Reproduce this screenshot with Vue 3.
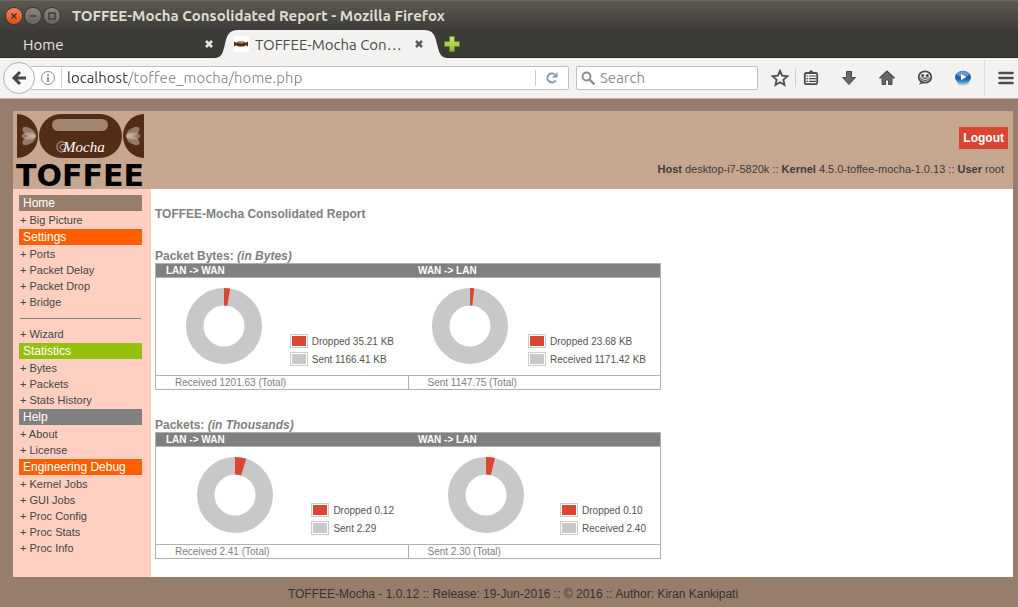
<script setup>
const menu = [
  { title: 'Home', tone: 'brown', groups: [['Big Picture']] },
  { title: 'Settings', tone: 'orange', groups: [['Ports', 'Packet Delay', 'Packet Drop', 'Bridge'], ['Wizard']] },
  { title: 'Statistics', tone: 'green', groups: [['Bytes', 'Packets', 'Stats History']] },
  { title: 'Help', tone: 'gray', groups: [['About', 'License']] },
  { title: 'Engineering Debug', tone: 'orange', groups: [['Kernel Jobs', 'GUI Jobs', 'Proc Config', 'Proc Stats', 'Proc Info']] },
]

const reports = [
  {
    name: 'Packet Bytes:',
    unit: '(in Bytes)',
    charts: [
      { head: 'LAN -> WAN', share: 2.6, dropped: 'Dropped 35.21 KB', passed: 'Sent 1166.41 KB', total: 'Received 1201.63 (Total)' },
      { head: 'WAN -> LAN', share: 1.8, dropped: 'Dropped 23.68 KB', passed: 'Received 1171.42 KB', total: 'Sent 1147.75 (Total)' },
    ],
  },
  {
    name: 'Packets:',
    unit: '(in Thousands)',
    charts: [
      { head: 'LAN -> WAN', share: 4.8, dropped: 'Dropped 0.12', passed: 'Sent 2.29', total: 'Received 2.41 (Total)' },
      { head: 'WAN -> LAN', share: 3.8, dropped: 'Dropped 0.10', passed: 'Received 2.40', total: 'Sent 2.30 (Total)' },
    ],
  },
]
</script>

<template>
  <div class="window">
    <header class="titlebar">
      <button class="wm close" aria-label="Close window">
        <svg viewBox="0 0 16 16"><path d="M5.5 5.5l5 5M10.5 5.5l-5 5" stroke="#4a2a1c" stroke-width="1.4" /></svg>
      </button>
      <button class="wm" aria-label="Minimize">
        <svg viewBox="0 0 16 16"><path d="M4.5 8h7" stroke="#3a3934" stroke-width="1.3" /></svg>
      </button>
      <button class="wm" aria-label="Maximize">
        <svg viewBox="0 0 16 16"><rect x="5" y="5" width="6" height="6" fill="none" stroke="#3a3934" stroke-width="1.3" /></svg>
      </button>
      <span class="window-title">TOFFEE-Mocha Consolidated Report - Mozilla Firefox</span>
    </header>

    <nav class="tabs" aria-label="Tabs">
      <div class="tab">
        <button class="tab-label">Home</button>
        <button class="tab-close" aria-label="Close Home">
          <svg viewBox="0 0 10 10"><path d="M2 2l6 6M8 2l-6 6" stroke="#e6e4df" stroke-width="2.6" /></svg>
        </button>
      </div>
      <div class="tab active">
        <svg class="tab-shape" viewBox="0 0 234 28" preserveAspectRatio="none">
          <path d="M0 28C8 28 9 22 11 14C13 5 15 0 24 0H210C219 0 221 5 223 14C225 22 226 28 234 28Z" fill="#f3f2f1" />
        </svg>
        <svg class="favicon" viewBox="0 0 16 16">
          <rect width="16" height="16" fill="#fff" />
          <path d="M1 5.500L4 7v2L1 10.500ZM15 5.500L12 7v2l3 1.500Z" fill="#5a3019" />
          <rect x="3.500" y="5.500" width="9" height="5" rx="2.500" fill="#4e2a15" />
          <rect x="5" y="6" width="6" height="1.500" rx=".7" fill="#a18069" />
        </svg>
        <button class="tab-label">TOFFEE-Mocha Con…</button>
        <button class="tab-close" aria-label="Close TOFFEE-Mocha">
          <svg viewBox="0 0 10 10"><path d="M2 2l6 6M8 2l-6 6" stroke="#5d5c59" stroke-width="2.600" /></svg>
        </button>
      </div>
      <button class="new-tab" aria-label="New tab">
        <svg viewBox="0 0 16 16">
          <defs><linearGradient id="plus" x2="0" y2="1"><stop offset="0" stop-color="#d5e86a" /><stop offset="1" stop-color="#8fb72c" /></linearGradient></defs>
          <path d="M5.500 .5h5v5h5v5h-5v5h-5v-5h-5v-5h5Z" fill="url(#plus)" stroke="#5f8a2a" />
        </svg>
      </button>
    </nav>

    <div class="toolbar">
      <button class="back" aria-label="Back">
        <svg viewBox="0 0 16 16"><path d="M9 2L3 8l6 6M3.500 8H15" fill="none" stroke="#474745" stroke-width="3" /></svg>
      </button>
      <div class="urlbar">
        <svg class="info" viewBox="0 0 16 16">
          <circle cx="8" cy="8" r="6.500" fill="none" stroke="#8c8c8c" />
          <path d="M8 7v5M8 4v2" stroke="#8c8c8c" stroke-width="1.600" />
        </svg>
        <input class="url" aria-label="Address" value="localhost/toffee_mocha/home.php" />
        <button class="reload" aria-label="Reload">
          <svg viewBox="0 0 14 14">
            <path d="M10.700 9.500A4.500 4.500 0 1 1 9.500 3.200" fill="none" stroke="#8596a6" stroke-width="2" />
            <path d="M12.500 1v5.500H7Z" fill="#8596a6" />
          </svg>
        </button>
      </div>
      <div class="searchbar">
        <svg viewBox="0 0 14 14"><circle cx="5.500" cy="5.500" r="4" fill="none" stroke="#8c8c8c" stroke-width="1.900" /><path d="M8.500 8.500l5 5" stroke="#8c8c8c" stroke-width="2.400" /></svg>
        <input aria-label="Search" placeholder="Search" />
      </div>
      <button class="tool star" aria-label="Bookmark">
        <svg viewBox="0 0 18 18"><path d="M9 1.800l2.100 4.900 5.200.5-3.900 3.500 1.100 5.200L9 13.200l-4.500 2.700 1.100-5.200L1.700 7.200l5.200-.5Z" fill="none" stroke="#4c4c4a" stroke-width="1.800" /></svg>
      </button>
      <span class="rule short"></span>
      <button class="tool list" aria-label="Bookmarks menu">
        <svg viewBox="0 0 18 18">
          <path d="M5.500 4L9 1l3.500 3Z" fill="#4c4c4a" />
          <rect x="2.800" y="4" width="12.400" height="11.200" rx="1.500" fill="#f3f2f1" stroke="#4c4c4a" stroke-width="1.800" />
          <path d="M4.500 7h1.500M4.500 9.700h1.500M4.500 12.400h1.500M7 7h7M7 9.700h7M7 12.400h7" stroke="#4c4c4a" stroke-width="1.200" />
        </svg>
      </button>
      <button class="tool" aria-label="Downloads">
        <svg viewBox="0 0 18 18"><path d="M6.500 2.500h5v6h4L9 15.500 2.500 8.500h4Z" fill="#686866" stroke="#4c4c4a" /></svg>
      </button>
      <button class="tool" aria-label="Home page">
        <svg viewBox="0 0 18 18">
          <path d="M4 9l5-4.500L14 9v6.500h-3.500V11h-3v4.500H4Z" fill="#686866" stroke="#4c4c4a" />
          <path d="M1.500 9.300L9 2.500l7.500 6.800" fill="none" stroke="#4c4c4a" stroke-width="1.700" />
        </svg>
      </button>
      <button class="tool" aria-label="Chat">
        <svg viewBox="0 0 18 18">
          <path d="M5 12.500L3 15.500l5-1.500Z" fill="#4c4c4a" />
          <ellipse cx="9" cy="8" rx="6.300" ry="5.600" fill="#f3f2f1" stroke="#4c4c4a" stroke-width="1.800" />
          <circle cx="6.700" cy="6.500" r="1.500" fill="#4c4c4a" /><circle cx="11.300" cy="6.500" r="1.500" fill="#4c4c4a" />
          <path d="M4 8.500h10c-.8 4.500-9.200 4.500-10 0Z" fill="#4c4c4a" /><path d="M5.500 9.500q3.500 2 7 0" fill="none" stroke="#f3f2f1" />
        </svg>
      </button>
      <button class="tool" aria-label="Media player">
        <svg viewBox="0 0 18 18">
          <defs><linearGradient id="ball" x2="0" y2="1"><stop offset="0" stop-color="#2d6cad" /><stop offset=".6" stop-color="#1960a8" /><stop offset="1" stop-color="#55b4ee" /></linearGradient></defs>
          <ellipse cx="9" cy="14" rx="6" ry="2.500" fill="#c4c7ca" />
          <ellipse cx="9" cy="8.300" rx="8" ry="6.500" fill="url(#ball)" />
          <ellipse cx="9" cy="5" rx="6" ry="2.800" fill="#8db8df" opacity=".6" />
          <path d="M7 5l5.500 3L7 11Z" fill="#fff" />
        </svg>
      </button>
      <span class="rule tall"></span>
      <button class="tool menu-button" aria-label="Menu">
        <svg viewBox="0 0 18 18"><path d="M2.500 4h13M2.500 9h13M2.500 14h13" stroke="#4c4c4a" stroke-width="2.600" stroke-linecap="round" /></svg>
      </button>
    </div>

    <div class="page">
      <div class="sheet">
        <header class="banner">
          <svg class="logo" viewBox="0 0 130 76" role="img" aria-label="TOFFEE Mocha">
            <path d="M1 2a21 22 0 0 1 0 44ZM128 2a21 22 0 0 0 0 44Z" fill="#532c17" />
            <rect x="23" y="2" width="83" height="44" rx="22" fill="#532c17" />
            <rect x="36" y="7" width="56" height="12" rx="6" fill="#a28570" />
            <g fill="#dcc4b4" fill-opacity=".5">
              <ellipse cx="13" cy="20" rx="7.500" ry="4" transform="rotate(34 13 20)" />
              <ellipse cx="13" cy="24" rx="7.500" ry="3.500" />
              <ellipse cx="13" cy="28" rx="7.500" ry="4" transform="rotate(-34 13 28)" />
              <ellipse cx="117" cy="20" rx="7.500" ry="4" transform="rotate(-34 117 20)" />
              <ellipse cx="117" cy="24" rx="7.500" ry="3.500" />
              <ellipse cx="117" cy="28" rx="7.500" ry="4" transform="rotate(34 117 28)" />
            </g>
            <path d="M49 31c-4-3-9 0-8 5s8 6 9-1c0-4-6-3-6 0 0 4 5 3 5 1" fill="none" stroke="#fff" stroke-width=".6" />
            <text x="47" y="40" class="mocha">Mocha</text>
            <text x="0" y="74" class="toffee">TOFFEE</text>
          </svg>
          <div class="session">
            <button class="logout">Logout</button>
            <p class="host"><b>Host</b> desktop-i7-5820k :: <b>Kernel</b> 4.5.0-toffee-mocha-1.0.13 :: <b>User</b> root</p>
          </div>
        </header>

        <div class="columns">
          <nav class="sidebar" aria-label="Main">
            <section v-for="section in menu" :key="section.title">
              <h2 :class="section.tone">{{ section.title }}</h2>
              <template v-for="(group, i) in section.groups" :key="i">
                <hr v-if="i > 0" />
                <a v-for="item in group" :key="item" href="#">+ {{ item }}</a>
              </template>
            </section>
          </nav>

          <main class="content">
            <h1>TOFFEE-Mocha Consolidated Report</h1>
            <table v-for="report in reports" :key="report.name">
              <caption>{{ report.name }} <em>{{ report.unit }}</em></caption>
              <thead>
                <tr><th v-for="c in report.charts" :key="c.head" scope="col">{{ c.head }}</th></tr>
              </thead>
              <tbody>
                <tr>
                  <td v-for="c in report.charts" :key="c.head">
                    <div class="chart">
                      <svg class="donut" viewBox="0 0 76 76">
                        <circle cx="38" cy="38" r="29.250" fill="none" stroke="#c8c8c8" stroke-width="17.500" />
                        <circle cx="38" cy="38" r="29.250" fill="none" stroke="#d94632" stroke-width="17.500" pathLength="100" :stroke-dasharray="c.share + ' 100'" transform="rotate(-90 38 38)" />
                      </svg>
                      <ul class="legend">
                        <li><i class="red"></i>{{ c.dropped }}</li>
                        <li><i></i>{{ c.passed }}</li>
                      </ul>
                    </div>
                  </td>
                </tr>
              </tbody>
              <tfoot>
                <tr><td v-for="c in report.charts" :key="c.head">{{ c.total }}</td></tr>
              </tfoot>
            </table>
          </main>
        </div>
      </div>
      <footer class="credits">TOFFEE-Mocha - 1.0.12 :: Release: 19-Jun-2016 :: © 2016 :: Author: Kiran Kankipati</footer>
    </div>
  </div>
</template>

<style>
body { margin: 0; background: #967d6c; }
</style>

<style scoped>
.window { font-family: "Liberation Sans", Arial, sans-serif; color: #444; }
.window * { box-sizing: border-box; }
button { border: 0; padding: 0; background: none; font: inherit; color: inherit; }
input { border: 0; padding: 0; outline: 0; min-width: 0; background: none; }
svg { display: block; flex: none; }

.titlebar, .tabs, .toolbar { font-family: Ubuntu, "Noto Sans", sans-serif; display: flex; align-items: center; }
.titlebar { height: 30px; padding-left: 6px; gap: 3px; background: linear-gradient(#5c594f, #3d3c38); border-top: 1px solid #6b685d; }
.wm { width: 16px; height: 16px; border-radius: 50%; background: linear-gradient(#8a887f, #66645d); box-shadow: 0 0 0 1px #35342f; }
.wm.close { background: linear-gradient(#f48259, #de4d1c); }
.window-title { margin-left: 9px; font-size: 15px; line-height: 18px; font-weight: 700; color: #dfdbd2; white-space: nowrap; }

.tabs { height: 28px; background: #3c3b37; box-shadow: inset 0 -1px #2b2a27; font-size: 15px; }
.tab { display: flex; align-items: center; width: 214px; height: 28px; padding-left: 23px; color: #e6e4df; }
.tab.active { position: relative; width: 234px; padding: 0 24px 0 19px; color: #4a4a48; }
.tab-shape { position: absolute; inset: 0; width: 100%; height: 100%; }
.favicon { position: relative; width: 16px; height: 16px; margin-right: 6px; }
.tab-label { position: relative; flex: 1; min-width: 0; text-align: left; white-space: nowrap; }
.tab-close { position: relative; width: 10px; height: 10px; }
.new-tab { width: 16px; height: 16px; margin-left: -4px; position: relative; }

.toolbar { height: 41px; padding: 0 0 1px 3px; background: #f3f2f1; border-bottom: 1px solid #b8b0a8; font-size: 15px; }
.back { z-index: 1; display: grid; place-items: center; width: 32px; height: 32px; border: 1px solid #b5b3b0; border-radius: 50%; background: #f8f8f7; }
.back svg { width: 16px; height: 16px; }
.urlbar, .searchbar { display: flex; align-items: center; height: 24px; background: #fff; border: 1px solid #c2c0bd; border-radius: 2px; }
.urlbar { flex: 1; min-width: 0; margin: 0 7px 0 -5px; padding-left: 9px; }
.info { width: 16px; height: 16px; }
.url { flex: 1; height: 20px; margin-left: 5px; padding-left: 5px; border-left: 1px solid #d0d0d0; font: inherit; color: transparent; background: linear-gradient(to right, #333 65px, #8c8c8c 65px); background-clip: text; -webkit-background-clip: text; }
.reload { display: grid; place-items: center; width: 33px; height: 16px; border-left: 1px solid #ccc; }
.reload svg { width: 14px; height: 14px; }
.searchbar { width: 182px; padding-left: 4px; gap: 5px; margin-right: 10px; }
.searchbar svg { width: 14px; height: 14px; }
.searchbar input { flex: 1; height: 20px; font: inherit; }
.searchbar input::placeholder { color: #8e8e8e; opacity: 1; }
.tool { display: grid; place-items: center; width: 38px; height: 32px; }
.tool svg { width: 18px; height: 18px; }
.tool.star { width: 24px; }
.tool.list { width: 30px; margin-right: 4px; }
.tool.menu-button { width: 24px; margin: 0 0 0 9px; }
.rule { width: 1px; background: #cfcdca; }
.rule.short { height: 18px; margin-left: 3px; }
.rule.tall { height: 36px; margin-left: 2px; background: #dddbd8; }

.page { padding: 12px 5px 0 13px; background: #967d6c; }
.sheet { background: #fff; }
.banner { display: flex; justify-content: space-between; height: 78px; padding: 1px 5px 1px 3px; background: #c7a68f; }
.logo { width: 130px; height: 76px; overflow: visible; }
.mocha { font: italic 15px "Liberation Serif", serif; fill: #fff; }
.toffee { font: bold 30px "DejaVu Sans", sans-serif; fill: #000; }
.session { display: flex; flex-direction: column; align-items: flex-end; padding-top: 15px; }
.logout { height: 22px; padding: 0 4px; background: #d94632; color: #fff; font-size: 12px; font-weight: 700; }
.host { margin: 13px 4px 0 0; font-size: 11px; line-height: 14px; color: #3c3c3c; }

.columns { display: flex; }
.sidebar { width: 138px; flex: none; padding: 6px 9px 20px 6px; background: #ffd0c2; }
.sidebar section { padding-bottom: 1px; }
.sidebar h2 { margin: 0 0 1px; padding-left: 4px; font-size: 12px; font-weight: 400; line-height: 16px; color: #fff; }
.sidebar a { display: block; padding-left: 1px; font-size: 11px; line-height: 16px; color: #444; text-decoration: none; }
.sidebar hr { height: 1px; margin: 8px 1px 7px; border: 0; background: #808080; }
.brown { background: #967d6c; }
.orange { background: #ff5f00; }
.green { background: #94bf0b; }
.gray { background: #808080; }

.content { flex: 1; min-width: 0; padding: 17px 4px 18px; }
h1 { margin: 0 0 27px; font-size: 12px; line-height: 16px; color: #808080; }
table { width: 100%; max-width: 506px; margin-bottom: 28px; table-layout: fixed; border-collapse: collapse; }
table:last-child { margin-bottom: 0; }
caption { text-align: left; font-size: 12px; font-weight: 700; line-height: 14px; color: #808080; white-space: nowrap; }
thead, tbody, tfoot { border: 1px solid #b0b0b0; }
th { height: 13px; padding: 0 0 0 10px; background: #808080; color: #fff; font-size: 10px; line-height: 13px; text-align: left; }
td { padding: 0; }
tfoot td { height: 14px; padding-left: 19px; border: 1px solid #b0b0b0; font-size: 10px; line-height: 13px; color: #808080; }
.chart { display: flex; height: 97px; padding: 0 14px 7px 3px; }
.donut { width: 76px; height: 76px; margin: 10px auto 0; }
.legend { align-self: flex-end; margin: 0; padding: 0; list-style: none; font-size: 10px; color: #545454; }
.legend li { display: flex; align-items: center; gap: 4px; height: 18px; white-space: nowrap; }
.legend i { width: 18px; height: 14px; padding: 1px; border: 1px solid #ccc; background: #c8c8c8 content-box; }
.legend .red { background-color: #d94632; }
.credits { padding: 10px 0 6px; text-align: center; font-size: 12px; line-height: 14px; color: #333; }
</style>
